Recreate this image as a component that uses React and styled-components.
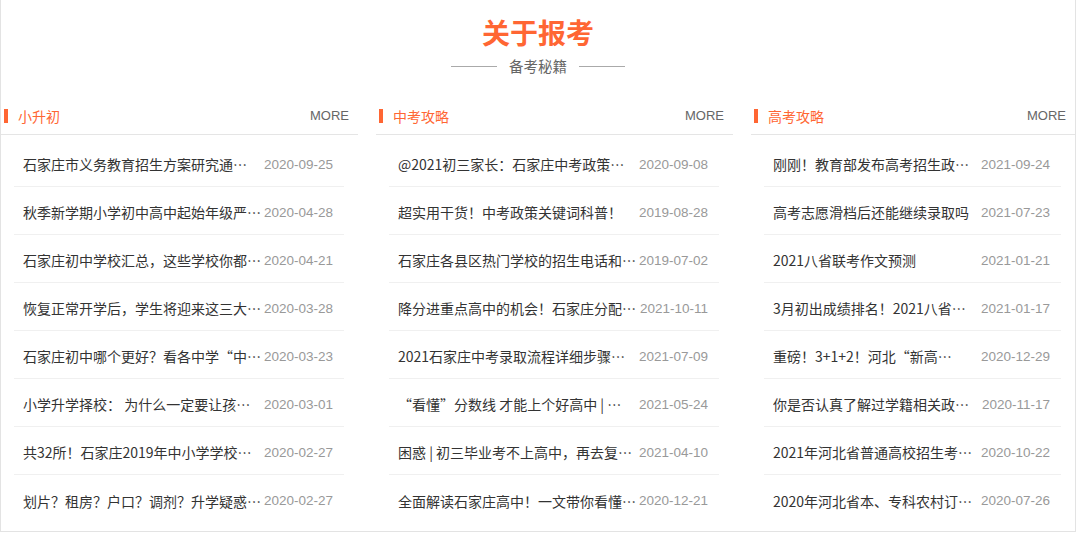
import React from "react";
import styled, { createGlobalStyle } from "styled-components";

const GlobalStyle = createGlobalStyle`
  html, body { margin: 0; padding: 0; background: #fff; }
  body { font-family: "Liberation Sans", "Noto Sans CJK SC", sans-serif; }
  * { box-sizing: border-box; }
`;

const Page = styled.div`
  width: 1076px;
  height: 532px;
  border: 1px solid #e3e3e3;
  border-top: none;
  overflow: hidden;
  background: #fff;
`;

const Heading = styled.header`
  display: flex;
  flex-direction: column;
  align-items: center;
  padding-top: 14px;
`;

const MainTitle = styled.h1`
  margin: 0;
  font-family: "Noto Sans CJK SC", sans-serif;
  font-size: 28px;
  line-height: 36px;
  font-weight: 700;
  color: #ff6633;
`;

const SubTitle = styled.div`
  margin-top: 6px;
  display: flex;
  align-items: center;
  gap: 12px;
  font-family: "Noto Sans CJK SC", sans-serif;
  font-size: 14.5px;
  line-height: 20px;
  color: #666;
  &::before, &::after {
    content: "";
    width: 46px;
    height: 1px;
    background: #aaa;
  }
`;

const Columns = styled.div`
  margin-top: 20px;
  display: grid;
  grid-template-columns: 357px 357px 1fr;
  column-gap: 18px;
`;

const Column = styled.section`
  min-width: 0;
`;

const ColumnHeader = styled.div`
  height: 39px;
  display: flex;
  align-items: center;
  padding: 1px 9px 0 3px;
  border-bottom: 1px solid #e5e5e5;
`;

const Bar = styled.span`
  width: 4px;
  height: 14px;
  background: #ff6633;
  margin-right: 10px;
`;

const ColumnTitle = styled.span`
  flex: 1;
  font-family: "Noto Sans CJK SC", sans-serif;
  font-size: 14px;
  color: #ff6633;
`;

const More = styled.a`
  font-family: "Liberation Sans", sans-serif;
  font-size: 13px;
  color: #666;
  text-decoration: none;
`;

const List = styled.ul`
  list-style: none;
  margin: 4px 14px 0 13px;
  padding: 0;
`;

const Item = styled.li`
  height: 48px;
  padding: 3px 11px 0 9px;
  display: flex;
  align-items: center;
  border-bottom: 1px solid #f0f0f0;
  &:last-child { border-bottom: none; }
`;

const ItemTitle = styled.span`
  flex: 1;
  min-width: 0;
  white-space: nowrap;
  overflow: hidden;
  text-overflow: ellipsis;
  font-family: "Noto Sans CJK SC", sans-serif;
  font-size: 14px;
  color: #333;
`;

const ItemDate = styled.span`
  flex: none;
  font-family: "Liberation Sans", sans-serif;
  font-size: 13.5px;
  color: #999;
`;

const columns = [
  {
    title: "小升初",
    items: [
      ["石家庄市义务教育招生方案研究通…", "2020-09-25"],
      ["秋季新学期小学初中高中起始年级严…", "2020-04-28"],
      ["石家庄初中学校汇总，这些学校你都…", "2020-04-21"],
      ["恢复正常开学后，学生将迎来这三大…", "2020-03-28"],
      ["石家庄初中哪个更好？看各中学“中…", "2020-03-23"],
      ["小学升学择校： 为什么一定要让孩…", "2020-03-01"],
      ["共32所！石家庄2019年中小学学校…", "2020-02-27"],
      ["划片？租房？户口？调剂？升学疑惑…", "2020-02-27"],
    ],
  },
  {
    title: "中考攻略",
    items: [
      ["@2021初三家长：石家庄中考政策…", "2020-09-08"],
      ["超实用干货！中考政策关键词科普！", "2019-08-28"],
      ["石家庄各县区热门学校的招生电话和…", "2019-07-02"],
      ["降分进重点高中的机会！石家庄分配…", "2021-10-11"],
      ["2021石家庄中考录取流程详细步骤…", "2021-07-09"],
      ["“看懂”分数线 才能上个好高中 | …", "2021-05-24"],
      ["困惑 | 初三毕业考不上高中，再去复…", "2021-04-10"],
      ["全面解读石家庄高中！一文带你看懂…", "2020-12-21"],
    ],
  },
  {
    title: "高考攻略",
    items: [
      ["刚刚！教育部发布高考招生政…", "2021-09-24"],
      ["高考志愿滑档后还能继续录取吗", "2021-07-23"],
      ["2021八省联考作文预测", "2021-01-21"],
      ["3月初出成绩排名！2021八省…", "2021-01-17"],
      ["重磅！3+1+2！河北“新高…", "2020-12-29"],
      ["你是否认真了解过学籍相关政…", "2020-11-17"],
      ["2021年河北省普通高校招生考…", "2020-10-22"],
      ["2020年河北省本、专科农村订…", "2020-07-26"],
    ],
  },
];

export default function App() {
  return (
    <>
      <GlobalStyle />
      <Page>
        <Heading>
          <MainTitle>关于报考</MainTitle>
          <SubTitle>备考秘籍</SubTitle>
        </Heading>
        <Columns>
          {columns.map((col) => (
            <Column key={col.title}>
              <ColumnHeader>
                <Bar />
                <ColumnTitle>{col.title}</ColumnTitle>
                <More href="#">MORE</More>
              </ColumnHeader>
              <List>
                {col.items.map(([t, d], i) => (
                  <Item key={i}>
                    <ItemTitle>{t}</ItemTitle>
                    <ItemDate>{d}</ItemDate>
                  </Item>
                ))}
              </List>
            </Column>
          ))}
        </Columns>
      </Page>
    </>
  );
}
